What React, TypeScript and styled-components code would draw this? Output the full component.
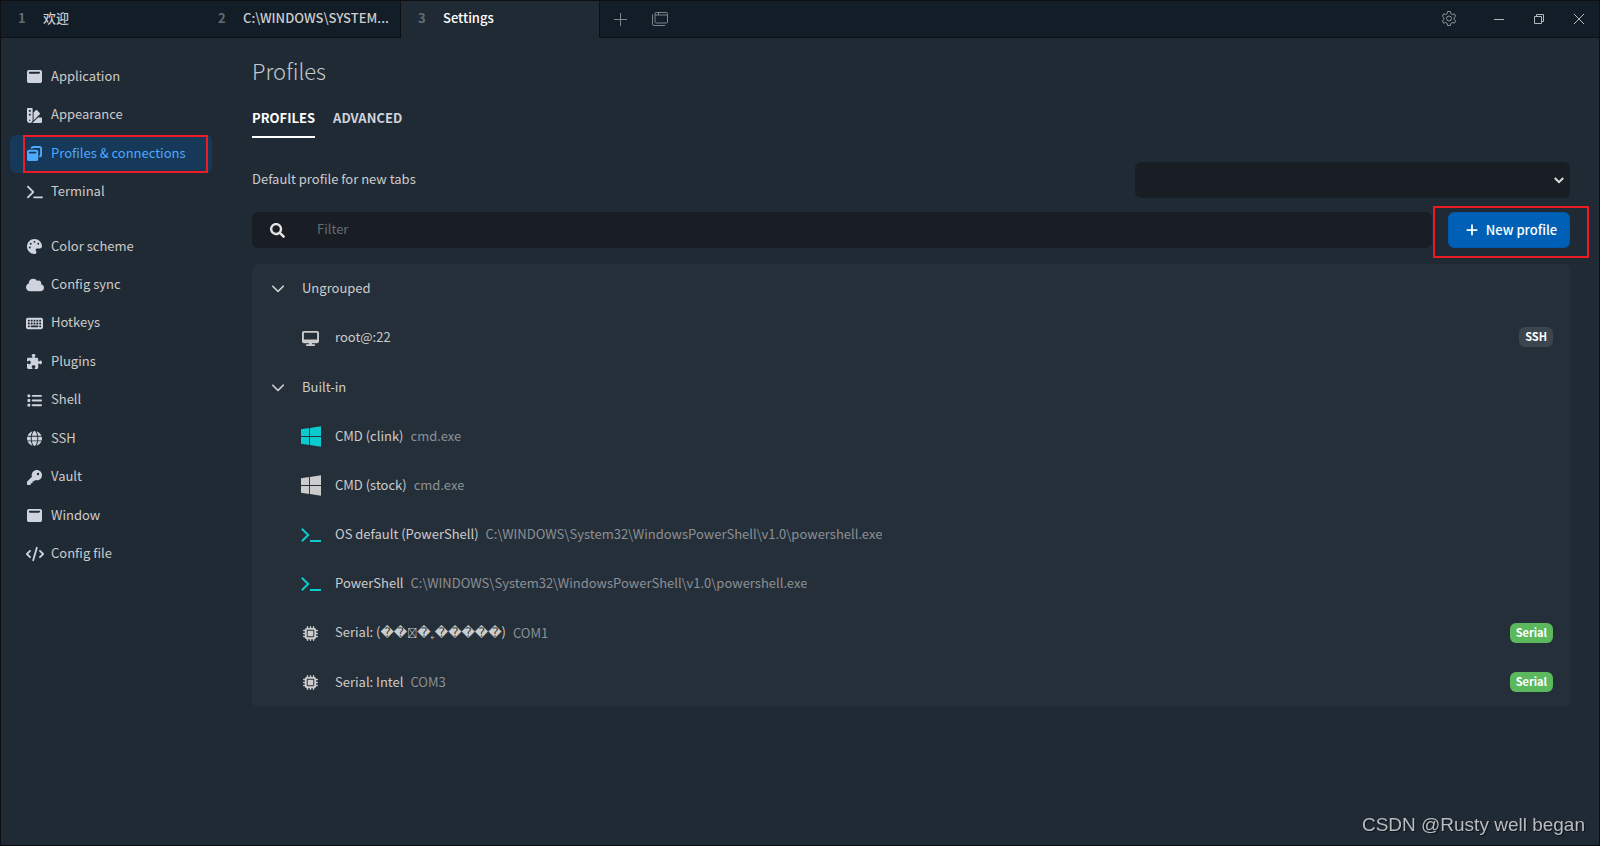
import React from "react";
import styled, { createGlobalStyle } from "styled-components";
import {
  FaWindowMaximize,
  FaWindowRestore,
  FaSwatchbook,
  FaTerminal,
  FaPalette,
  FaCloud,
  FaKeyboard,
  FaPuzzlePiece,
  FaList,
  FaGlobe,
  FaKey,
  FaCode,
  FaChevronDown,
  FaPlus,
  FaDesktop,
  FaMicrochip,
} from "react-icons/fa6";
import { FaSearch } from "react-icons/fa";

const colors = {
  bar: "#131d27",
  content: "#202a34",
  panel: "#252f39",
  field: "#191e25",
  line: "#0d0f12",
  text: "#cccccc",
  muted: "#8b9096",
  cyan: "#0bcbcf",
  active: "#4eaaff",
  activeBg: "#163859",
  mark: "#ed1c24",
};

const GlobalStyle = createGlobalStyle`
  *, *::before, *::after { box-sizing: border-box; }
  body {
    margin: 0;
    background: ${colors.content};
    color: ${colors.text};
    font: 400 13px/20px "Noto Sans CJK SC", sans-serif;
  }
  button, input, select { font: inherit; color: inherit; }
  button { border: 0; padding: 0; background: none; cursor: pointer; }
  svg { display: block; flex: none; }
`;

const Window = styled.div`
  display: flex;
  flex-direction: column;
  min-height: 100vh;
  border: 1px solid ${colors.line};
`;

const TitleBar = styled.header`
  display: flex;
  height: 37px;
  background: ${colors.bar};
`;

const Tab = styled.button<{ $active?: boolean; $edge?: boolean }>`
  display: flex;
  align-items: center;
  flex: 0 1 ${(p) => (p.$active ? 199 : 200)}px;
  min-width: 0;
  padding: 0 8px 2px 17px;
  gap: 16px;
  text-align: left;
  color: ${(p) => (p.$active ? "#fff" : "inherit")};
  background: ${(p) => (p.$active ? colors.content : "none")};
  border-bottom: 1px solid ${(p) => (p.$active ? colors.content : colors.line)};
  border-right: ${(p) => (p.$edge ? 1 : 0)}px solid ${colors.line};
`;

const TabIndex = styled.span`
  flex: 0 0 9px;
  font-weight: 700;
  color: #646b73;
`;

const TabTitle = styled.span`
  white-space: nowrap;
  font-weight: 500;
`;

const BarTools = styled.div`
  display: flex;
  flex: 1;
  border-bottom: 1px solid ${colors.line};
`;

const BarButton = styled.button<{ $push?: boolean }>`
  display: grid;
  place-items: center;
  width: 40px;
  color: #7d848b;
  ${(p) => p.$push && "margin-left: auto; margin-right: 10px; color: #8f959b;"}
`;

const WindowButton = styled(BarButton)`
  color: #b4b8bc;
`;

const Body = styled.div`
  display: flex;
  flex: 1;
`;

const Sidebar = styled.nav`
  flex: 0 0 211px;
  padding: 20px 0 20px 9px;
`;

const NavList = styled.ul<{ $height: number }>`
  display: grid;
  grid-auto-rows: 1fr;
  min-height: ${(p) => p.$height}px;
  margin: 0 0 16px;
  padding: 0;
  list-style: none;
`;

const NavLink = styled.a<{ $active?: boolean }>`
  position: relative;
  display: flex;
  align-items: center;
  height: 38px;
  padding: 0 16px 3px 15px;
  gap: 7px;
  border-radius: 6px;
  color: ${(p) => (p.$active ? colors.active : colors.text)};
  background: ${(p) => (p.$active ? colors.activeBg : "none")};
  text-decoration: none;
`;

const NavIcon = styled.span<{ $active?: boolean }>`
  display: grid;
  place-items: center;
  width: 19px;
  padding-top: 2px;
  color: ${(p) => (p.$active ? colors.active : "#ced3dd")};
`;

const Outline = styled.span<{ $inset: string }>`
  position: absolute;
  inset: ${(p) => p.$inset};
  border: 2px solid ${colors.mark};
  pointer-events: none;
`;

const Main = styled.main`
  flex: 1;
  min-width: 0;
  padding: 15px 29px 24px 40px;
`;

const Title = styled.h1`
  margin: 0;
  font-size: 22px;
  line-height: 34px;
  font-weight: 200;
  color: #c3c8cd;
`;

const SectionTabs = styled.div`
  display: flex;
  gap: 18px;
  margin-top: 17px;
`;

const SectionTab = styled.button<{ $active?: boolean }>`
  height: 34px;
  padding-bottom: 4px;
  line-height: 24px;
  font-weight: 700;
  border-bottom: 2px solid ${(p) => (p.$active ? "#fff" : "transparent")};
  color: ${(p) => (p.$active ? "#fff" : "#ced3dd")};
`;

const FormRow = styled.div`
  display: flex;
  align-items: center;
  justify-content: space-between;
  margin-top: 24px;
`;

const FieldLabel = styled.label`
  padding-bottom: 2px;
`;

const SelectWrap = styled.div`
  position: relative;
  flex: 0 0 33%;
`;

const Select = styled.select`
  display: block;
  width: 100%;
  height: 36px;
  padding: 0 32px 0 12px;
  border: 0;
  border-radius: 6px;
  background: ${colors.field};
  appearance: none;
`;

const SelectArrow = styled.span`
  position: absolute;
  right: 6px;
  top: 14px;
  color: #dddddd;
  pointer-events: none;
`;

const FilterRow = styled.div`
  display: flex;
  gap: 16px;
  margin-top: 14px;
`;

const FilterBox = styled.label`
  display: flex;
  align-items: center;
  flex: 1;
  height: 36px;
  padding-left: 18px;
  gap: 32px;
  border-radius: 6px;
  background: ${colors.field};
  color: #e3e3e3;
`;

const FilterInput = styled.input`
  flex: 1;
  min-width: 0;
  padding: 0 0 2px;
  border: 0;
  outline: 0;
  background: none;
  &::placeholder {
    color: #636c72;
    opacity: 1;
  }
`;

const PrimaryButton = styled.button`
  position: relative;
  display: flex;
  align-items: center;
  justify-content: center;
  width: 122px;
  height: 36px;
  padding: 0 0 1px 4px;
  gap: 7px;
  border: 1px solid #0059a8;
  border-radius: 6px;
  background: #0060b5;
  color: #fff;
  font-weight: 500;
`;

const Groups = styled.div`
  display: grid;
  grid-auto-rows: 1fr;
  min-height: 443px;
  margin-top: 16px;
  border-radius: 6px;
  background: ${colors.panel};
`;

const GroupRow = styled.button`
  display: flex;
  align-items: center;
  padding: 0 17px 1px 19px;
  gap: 17px;
  text-align: left;
`;

const ProfileRow = styled.div`
  display: flex;
  align-items: center;
  min-width: 0;
  padding: 0 17px 1px 49px;
`;

const ProfileIcon = styled.span<{ $color?: string }>`
  display: flex;
  align-items: center;
  justify-content: safe center;
  flex: 0 0 18px;
  min-width: 0;
  margin-right: 16px;
  padding-top: 2px;
  color: ${(p) => p.$color ?? colors.text};
`;

const ProfileName = styled.span`
  white-space: nowrap;
`;

const Garbled = styled.span`
  font-family: "DejaVu Sans", sans-serif;
`;

const MissingGlyph = styled.span`
  font: 10px/20px "Noto Sans CJK SC", sans-serif;
`;

const ProfileDetail = styled.span`
  margin-left: 7px;
  overflow: hidden;
  text-overflow: ellipsis;
  white-space: nowrap;
  color: ${colors.muted};
`;

const Badge = styled.span<{ $color: string }>`
  margin-left: auto;
  height: 20px;
  padding: 0 6px;
  border-radius: 6px;
  background: ${(p) => p.$color};
  color: #fff;
  font-size: 11px;
  line-height: 18px;
  font-weight: 700;
`;

const Watermark = styled.footer`
  position: fixed;
  right: 15px;
  bottom: 7px;
  font: 400 19px/28px "Liberation Sans", sans-serif;
  color: #b9bcbf;
  text-shadow: 1px 1px 1px #0d1218;
`;

const WindowsLogo = () => (
  <svg width="20" height="21" viewBox="0 0 20 21" fill="currentColor" aria-hidden="true">
    <path d="M0 3.200 8 2v8H0zM8.900 1.900 20 .3V10H8.900zM0 11h8v8L0 17.800zM8.900 11H20v9.700L8.900 19.100z" />
  </svg>
);

const PowerShellPrompt = () => (
  <svg width="20" height="16" viewBox="0 0 20 16" fill="none" stroke="currentColor" strokeWidth="2" aria-hidden="true">
    <path d="M.8 1.800 7.200 8 .8 14.300M9 14h11" />
  </svg>
);

const TabsIcon = () => (
  <svg width="16" height="14" viewBox="0 0 16 14" fill="none" stroke="currentColor" aria-hidden="true">
    <path d="M4.500.5h10a1 1 0 0 1 1 1v8.500a1 1 0 0 1-1 1h-10a1.500 1.500 0 0 1-1.500-1.500V1.500a1 1 0 0 1 1-1zM3 3h12.500M6.500.5V3" />
    <path d="M.5 2.500V12A1.500 1.500 0 0 0 2 13.500h11" />
  </svg>
);

const GearIcon = () => (
  <svg width="16" height="16" viewBox="0 0 16 16" fill="none" stroke="currentColor" strokeLinejoin="round" aria-hidden="true">
    <path d="M6.600.5h2.800l.4 2.100 1.500.9 2-.7 1.400 2.400-1.600 1.400v1.800l1.600 1.400-1.400 2.400-2-.7-1.500.9-.4 2.100H6.600l-.4-2.100-1.500-.9-2 .7-1.400-2.400 1.600-1.400V6.600L1.300 5.200l1.400-2.400 2 .7 1.500-.9z" />
    <circle cx="8" cy="7.500" r="2.500" />
  </svg>
);

const PlusIcon = () => (
  <svg width="13" height="13" viewBox="0 0 13 13" stroke="currentColor" aria-hidden="true">
    <path d="M0 6.500h13M6.500 0v13" />
  </svg>
);

const MinimizeIcon = () => (
  <svg width="10" height="10" viewBox="0 0 10 10" stroke="currentColor" aria-hidden="true">
    <path d="M0 5.500h10" />
  </svg>
);

const RestoreIcon = () => (
  <svg width="10" height="10" viewBox="0 0 10 10" fill="none" stroke="currentColor" aria-hidden="true">
    <path d="M.5 2.500h7v7h-7zM2.500 2.500v-2h7v7h-2" />
  </svg>
);

const CloseIcon = () => (
  <svg width="10" height="10" viewBox="0 0 10 10" stroke="currentColor" aria-hidden="true">
    <path d="M0 0l10 10M10 0 0 10" />
  </svg>
);

const ArrowIcon = () => (
  <svg width="10" height="9" viewBox="0 0 10 9" fill="none" stroke="currentColor" strokeWidth="2" aria-hidden="true">
    <path d="M.8 2 5 6.200 9.200 2" />
  </svg>
);

type NavItem = { label: string; icon: React.ReactNode; active?: boolean };

const navGroups: { height: number; items: NavItem[] }[] = [
  {
    height: 154,
    items: [
      { label: "Application", icon: <FaWindowMaximize size={15} /> },
      { label: "Appearance", icon: <FaSwatchbook size={15} /> },
      { label: "Profiles & connections", icon: <FaWindowRestore size={15} />, active: true },
      { label: "Terminal", icon: <FaTerminal size={16} /> },
    ],
  },
  {
    height: 346,
    items: [
      { label: "Color scheme", icon: <FaPalette size={15} /> },
      { label: "Config sync", icon: <FaCloud size={18} /> },
      { label: "Hotkeys", icon: <FaKeyboard size={17} /> },
      { label: "Plugins", icon: <FaPuzzlePiece size={15} /> },
      { label: "Shell", icon: <FaList size={15} /> },
      { label: "SSH", icon: <FaGlobe size={15} /> },
      { label: "Vault", icon: <FaKey size={15} /> },
      { label: "Window", icon: <FaWindowMaximize size={15} /> },
      { label: "Config file", icon: <FaCode size={18} /> },
    ],
  },
];

type Profile = {
  id: string;
  name: React.ReactNode;
  detail?: string;
  icon: React.ReactNode;
  color?: string;
  badge?: { text: string; color: string };
};

const powershell = "C:\\WINDOWS\\System32\\WindowsPowerShell\\v1.0\\powershell.exe";
const serial = { text: "Serial", color: "#5cb85c" };

const profileGroups: { name: string; profiles: Profile[] }[] = [
  {
    name: "Ungrouped",
    profiles: [
      { id: "root", name: "root@:22", icon: <FaDesktop size={17} />, badge: { text: "SSH", color: "#3c444e" } },
    ],
  },
  {
    name: "Built-in",
    profiles: [
      { id: "clink", name: "CMD (clink)", detail: "cmd.exe", icon: <WindowsLogo />, color: colors.cyan },
      { id: "stock", name: "CMD (stock)", detail: "cmd.exe", icon: <WindowsLogo /> },
      { id: "os", name: "OS default (PowerShell)", detail: powershell, icon: <PowerShellPrompt />, color: colors.cyan },
      { id: "ps", name: "PowerShell", detail: powershell, icon: <PowerShellPrompt />, color: colors.cyan },
      {
        id: "com1",
        name: (
          <>
            Serial: (
            <Garbled>
              {"\uFFFD\uFFFD"}
              <MissingGlyph>{"\uE123"}</MissingGlyph>
              {"\uFFFD\u02FF\uFFFD\uFFFD\uFFFD\uFFFD\uFFFD"}
            </Garbled>
            )
          </>
        ),
        detail: "COM1",
        icon: <FaMicrochip size={15} />,
        badge: serial,
      },
      { id: "com3", name: "Serial: Intel", detail: "COM3", icon: <FaMicrochip size={15} />, badge: serial },
    ],
  },
];

const tabs = ["欢迎", "C:\\WINDOWS\\SYSTEM...", "Settings"];

export default function App() {
  return (
    <Window>
      <GlobalStyle />
      <TitleBar>
        {tabs.map((title, i) => (
          <Tab key={title} $active={i === 2} $edge={i > 0}>
            <TabIndex>{i + 1}</TabIndex>
            <TabTitle>{title}</TabTitle>
          </Tab>
        ))}
        <BarTools>
          <BarButton aria-label="New tab"><PlusIcon /></BarButton>
          <BarButton aria-label="Profiles and connections"><TabsIcon /></BarButton>
          <BarButton $push aria-label="Settings"><GearIcon /></BarButton>
          <WindowButton aria-label="Minimize"><MinimizeIcon /></WindowButton>
          <WindowButton aria-label="Restore"><RestoreIcon /></WindowButton>
          <WindowButton aria-label="Close"><CloseIcon /></WindowButton>
        </BarTools>
      </TitleBar>
      <Body>
        <Sidebar>
          {navGroups.map((group) => (
            <NavList key={group.height} $height={group.height}>
              {group.items.map((item) => (
                <li key={item.label}>
                  <NavLink href="#" $active={item.active}>
                    <NavIcon $active={item.active}>{item.icon}</NavIcon>
                    {item.label}
                    {item.active && <Outline $inset="0 4px 0 13px" />}
                  </NavLink>
                </li>
              ))}
            </NavList>
          ))}
        </Sidebar>
        <Main>
          <Title>Profiles</Title>
          <SectionTabs>
            <SectionTab $active>PROFILES</SectionTab>
            <SectionTab>ADVANCED</SectionTab>
          </SectionTabs>
          <FormRow>
            <FieldLabel htmlFor="default-profile">Default profile for new tabs</FieldLabel>
            <SelectWrap>
              <Select id="default-profile" />
              <SelectArrow><ArrowIcon /></SelectArrow>
            </SelectWrap>
          </FormRow>
          <FilterRow>
            <FilterBox>
              <FaSearch size={15} />
              <FilterInput type="text" placeholder="Filter" aria-label="Filter" />
            </FilterBox>
            <PrimaryButton>
              <FaPlus size={14} />
              New profile
              <Outline $inset="-7px -20px -11px -16px" />
            </PrimaryButton>
          </FilterRow>
          <Groups>
            {profileGroups.map((group) => (
              <React.Fragment key={group.name}>
                <GroupRow>
                  <FaChevronDown size={14} />
                  {group.name}
                </GroupRow>
                {group.profiles.map((p) => (
                  <ProfileRow key={p.id}>
                    <ProfileIcon $color={p.color}>{p.icon}</ProfileIcon>
                    <ProfileName>{p.name}</ProfileName>
                    {p.detail && <ProfileDetail>{p.detail}</ProfileDetail>}
                    {p.badge && <Badge $color={p.badge.color}>{p.badge.text}</Badge>}
                  </ProfileRow>
                ))}
              </React.Fragment>
            ))}
          </Groups>
        </Main>
      </Body>
      <Watermark>CSDN @Rusty well began</Watermark>
    </Window>
  );
}
